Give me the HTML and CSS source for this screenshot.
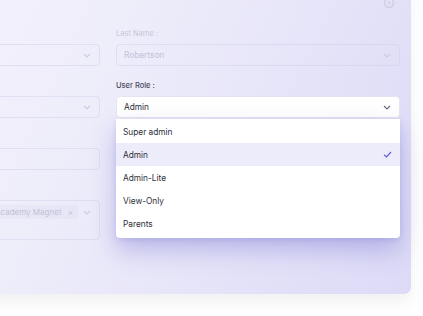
FILE: index.html
```html
<!DOCTYPE html>
<html lang="en">
<head>
<meta charset="UTF-8" />
<title>Edit user</title>
<link rel="stylesheet" href="styles.css">
</head>
<body>

<div class="modal">
  <div class="modal-head">
    <button class="close-btn" aria-label="Close">
      <svg width="12" height="12" viewBox="0 0 12 12"><circle cx="6" cy="6" r="4.5" fill="none" stroke="#cfcde0" stroke-width="1.4"/><circle cx="6" cy="6" r="1.6" fill="#d6d4e6"/></svg>
    </button>
  </div>

  <div class="form-grid">
    <!-- left column (faded, mostly off screen) -->
    <div class="col">
      <div class="field">
        <div class="lbl"></div>
        <div class="input faded">
          <span></span>
          <svg class="chev" width="8" height="5" viewBox="0 0 8 5"><path d="M1 1l3 3 3-3" fill="none" stroke="#cdcbe0" stroke-width="1.1"/></svg>
        </div>
      </div>
      <div class="field">
        <div class="lbl"></div>
        <div class="input faded">
          <span></span>
          <svg class="chev" width="8" height="5" viewBox="0 0 8 5"><path d="M1 1l3 3 3-3" fill="none" stroke="#cdcbe0" stroke-width="1.1"/></svg>
        </div>
      </div>
      <div class="field">
        <div class="lbl"></div>
        <div class="input faded"><span></span></div>
      </div>
      <div class="field">
        <div class="lbl"></div>
        <div class="input faded multi">
          <span class="chip">Academy Magnet <i>×</i></span>
          <svg class="chev" width="8" height="5" viewBox="0 0 8 5"><path d="M1 1l3 3 3-3" fill="none" stroke="#cdcbe0" stroke-width="1.1"/></svg>
        </div>
      </div>
    </div>

    <!-- right column -->
    <div class="col">
      <div class="field">
        <label class="lbl">Last Name :</label>
        <div class="input faded">
          <span>Robertson</span>
          <svg class="chev" width="8" height="5" viewBox="0 0 8 5"><path d="M1 1l3 3 3-3" fill="none" stroke="#cdcbe0" stroke-width="1.1"/></svg>
        </div>
      </div>
      <div class="field">
        <label class="lbl active">User Role :</label>
        <div class="select-wrap">
          <div class="input select">
            <span>Admin</span>
            <svg class="chev" width="8" height="5" viewBox="0 0 8 5"><path d="M1 1l3 3 3-3" fill="none" stroke="#6a6a7e" stroke-width="1.1"/></svg>
          </div>
          <ul class="dropdown">
            <li>Super admin</li>
            <li class="selected">Admin
              <svg width="9" height="7" viewBox="0 0 9 7"><path d="M1 3.6l2.4 2.3L8 1" fill="none" stroke="#5b58d8" stroke-width="1.1"/></svg>
            </li>
            <li>Admin-Lite</li>
            <li>View-Only</li>
            <li>Parents</li>
          </ul>
        </div>
      </div>
    </div>
  </div>
</div>

</body>
</html>
```

FILE: styles.css
```css
html, body {
  margin: 0;
  height: 100%;
}

body {
  background: #fff;
  font-family: Inter, "Noto Sans", sans-serif;
  width: 423px;
  height: 316px;
  overflow: hidden;
}

/* 背景卡片 */
.modal {
  margin: -10px 12px 0 -195px;
  padding: 6px 11px 52px;
  height: 246px;
  border-radius: 0 0 7px 0;
  background: linear-gradient(115deg, #f5f4fc 0%, #eeedfa 45%, #e3e1f8 80%, #dcdaf6 100%);
  box-shadow: 0 8px 14px rgba(60, 60, 90, 0.07);
}

.modal-head {
  display: flex;
  justify-content: flex-end;
  height: 14px;
  padding-right: 4px;
}

.close-btn {
  width: 14px;
  height: 14px;
  padding: 0;
  border: none;
  background: none;
  display: flex;
  align-items: center;
  justify-content: center;
}

.form-grid {
  margin-top: 19px;
  display: grid;
  grid-template-columns: 284px 284px;
  column-gap: 16px;
}

.col {
  display: flex;
  flex-direction: column;
  gap: 15px;
}

.field {
  display: flex;
  flex-direction: column;
  gap: 5px;
}

.lbl {
  font-size: 7.5px;
  line-height: 10px;
  color: #c6c5da;
  height: 10px;
}
.lbl.active {
  color: #4b4a5c;
  font-weight: 500;
}

.input {
  height: 22px;
  box-sizing: border-box;
  border-radius: 4px;
  padding: 0 8px 0 7px;
  display: flex;
  align-items: center;
  justify-content: space-between;
  font-size: 8.3px;
}

.faded {
  border: 1px solid rgba(205, 203, 232, 0.45);
  color: #c3c2d8;
}

.multi {
  height: 40px;
  align-items: flex-start;
  padding-top: 4px;
}
.multi .chev {
  margin-top: 5px;
}

.chip {
  background: rgba(225, 223, 242, 0.45);
  padding: 2px 5px;
  border-radius: 3px;
  margin-left: 166px;
  font-size: 8px;
  white-space: nowrap;
  color: #c2c1d6;
}
.chip i {
  font-style: normal;
  margin-left: 4px;
}

/* 用户角色下拉 */
.select-wrap {
  position: relative;
}

.select {
  background: #fff;
  border: 1px solid #e6e5ef;
  color: #2e2e38;
}

.dropdown {
  position: absolute;
  top: 23px;
  left: 0;
  right: 0;
  margin: 0;
  padding: 1px 0 3px;
  list-style: none;
  background: #fff;
  border-radius: 0 0 4px 4px;
  box-shadow: 0 12px 24px rgba(95, 90, 200, 0.34), 0 2px 5px rgba(95, 90, 200, 0.15);
}

.dropdown li {
  height: 23px;
  padding: 0 8px 0 7px;
  display: flex;
  align-items: center;
  justify-content: space-between;
  font-size: 8.3px;
  color: #2e2e38;
}

.dropdown li.selected {
  background: #edecfa;
}
```
